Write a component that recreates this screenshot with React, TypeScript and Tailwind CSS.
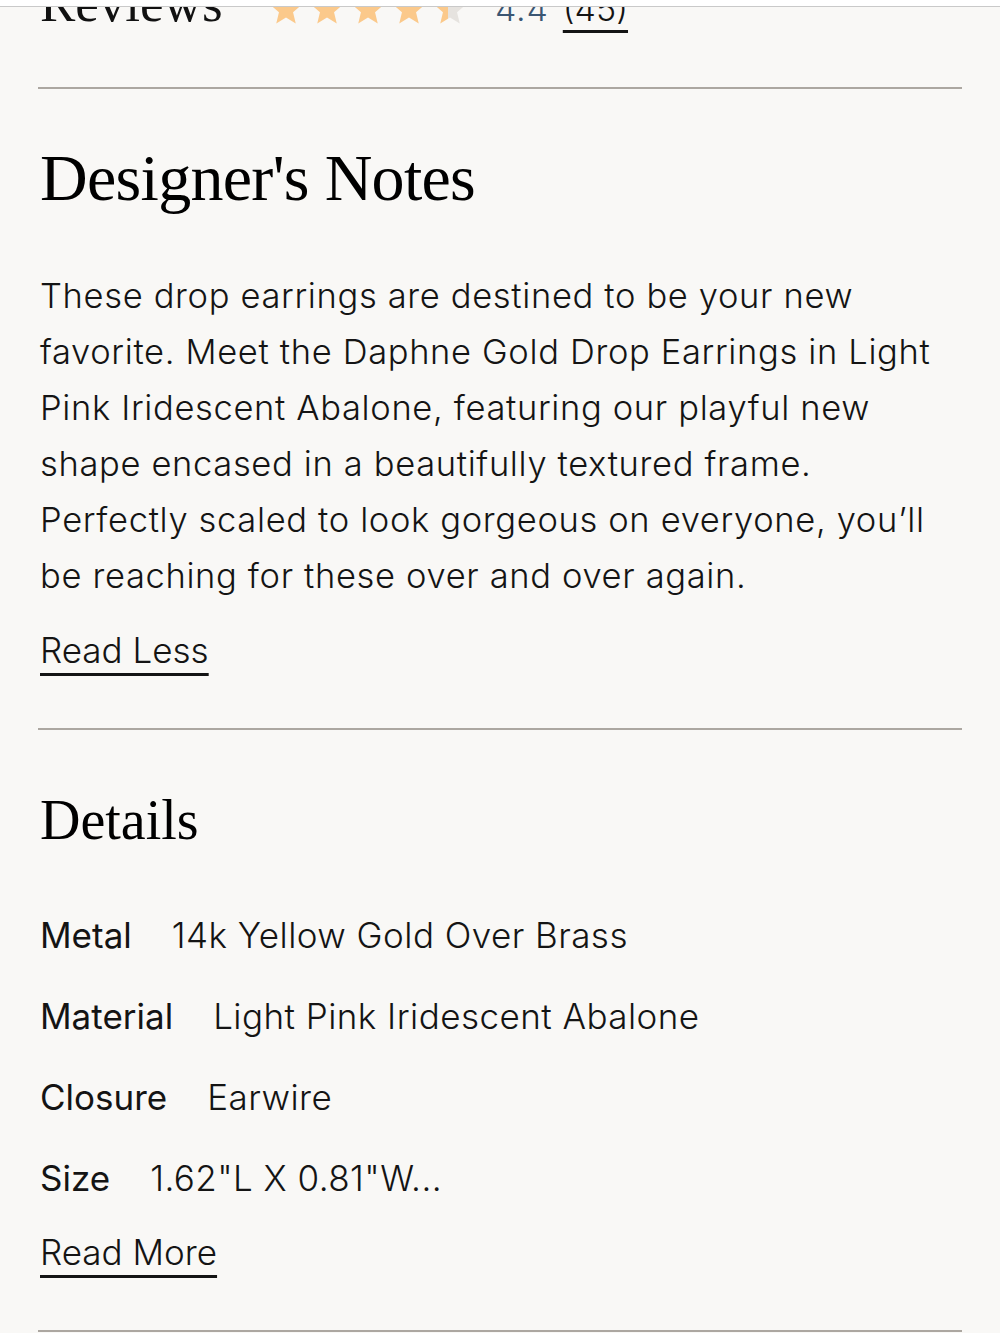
import React from "react";

const serif = { fontFamily: '"Liberation Serif", "DejaVu Serif", serif' };

function Star({ fill, id }: { fill: number; id: string }) {
  return (
    <svg width="36" height="36" viewBox="0 0 24 24" className="shrink-0">
      <defs>
        <linearGradient id={id} x1="0" x2="1" y1="0" y2="0">
          <stop offset={`${fill * 100}%`} stopColor="#fbc98b" />
          <stop offset={`${fill * 100}%`} stopColor="#e6e3df" />
        </linearGradient>
      </defs>
      <polygon
        points="12,1.5 14.9,8.6 22.5,9.2 16.7,14.1 18.5,21.6 12,17.6 5.5,21.6 7.3,14.1 1.5,9.2 9.1,8.6"
        fill={`url(#${id})`}
      />
    </svg>
  );
}

function DetailRow({ label, value }: { label: string; value: string }) {
  return (
    <div className="flex items-baseline gap-[40px] h-[81px] leading-[81px] whitespace-nowrap">
      <span className="font-normal">{label}</span>
      <span className="font-light tracking-[0.45px]">{value}</span>
    </div>
  );
}

export default function App() {
  return (
    <div
      className="w-[1000px] h-[1333px] overflow-hidden bg-[#f9f8f6] text-[#141414]"
      style={{ fontFamily: 'Inter, "Noto Sans", sans-serif' }}
    >
      <div className="relative z-10 h-[7px] bg-white border-b border-[#c9c9c9]" />
      <div className="px-[40px]">
        <div className="-mt-[30.5px] flex items-baseline h-[52px] whitespace-nowrap">
          <span className="text-[53px] leading-[52px] w-[228px] text-[#111]" style={serif}>
            Reviews
          </span>
          <div className="flex gap-[5px] self-end -translate-y-[2px]">
            <Star fill={1} id="s1" />
            <Star fill={1} id="s2" />
            <Star fill={1} id="s3" />
            <Star fill={1} id="s4" />
            <Star fill={0.45} id="s5" />
          </div>
          <span className="ml-[27px] text-[34px] leading-[52px] font-light text-[#3b5673] tracking-wide">
            4.4
          </span>
          <span className="ml-[14px] text-[34px] leading-[52px] font-light underline decoration-[3px] underline-offset-[9px]">
            (45)
          </span>
        </div>
      </div>

      <div className="mx-[38px] mt-[58px] h-[2px] bg-[#aca7a1]" />

      <div className="px-[40px]">
        <h2
          className="mt-[51px] text-[66px] leading-[76px] text-black tracking-[-0.7px] whitespace-nowrap"
          style={serif}
        >
          Designer's Notes
        </h2>
        <p className="mt-[52px] text-[34.5px] leading-[56px] font-light tracking-[0.65px] whitespace-nowrap">
          These drop earrings are destined to be your new
          <br />
          favorite. Meet the Daphne Gold Drop Earrings in Light
          <br />
          Pink Iridescent Abalone, featuring our playful new
          <br />
          shape encased in a beautifully textured frame.
          <br />
          Perfectly scaled to look gorgeous on everyone, you’ll
          <br />
          be reaching for these over and over again.
        </p>
        <div className="mt-[26px] h-[40px]">
          <span className="text-[35px] leading-[40px] font-light underline decoration-[3px] underline-offset-[10px]">
            Read Less
          </span>
        </div>
      </div>

      <div className="mx-[38px] mt-[58px] h-[2px] bg-[#aca7a1]" />

      <div className="px-[40px]">
        <h2 className="mt-[55px] text-[56px] leading-[70px] font-normal text-black" style={serif}>
          Details
        </h2>
        <div className="mt-[40px] text-[35px]">
          <DetailRow label="Metal" value="14k Yellow Gold Over Brass" />
          <DetailRow label="Material" value="Light Pink Iridescent Abalone" />
          <DetailRow label="Closure" value="Earwire" />
          <DetailRow label="Size" value={'1.62"L X 0.81"W...'} />
        </div>
        <div className="mt-[13.5px] h-[40px]">
          <span className="text-[35px] leading-[40px] font-light underline decoration-[3px] underline-offset-[10px]">
            Read More
          </span>
        </div>
      </div>

      <div className="mx-[38px] mt-[58px] h-[2px] bg-[#aca7a1]" />
    </div>
  );
}
